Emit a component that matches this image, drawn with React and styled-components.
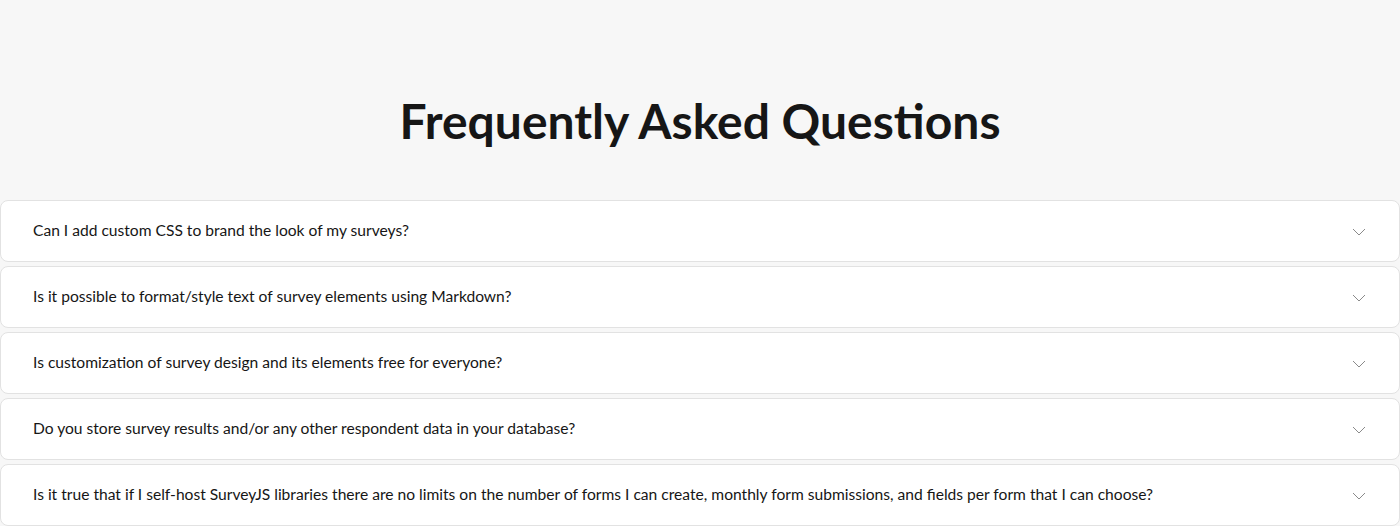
import React from 'react';
import styled, { createGlobalStyle } from 'styled-components';

const questions = [
    'Can I add custom CSS to brand the look of my surveys?',
    'Is it possible to format/style text of survey elements using Markdown?',
    'Is customization of survey design and its elements free for everyone?',
    'Do you store survey results and/or any other respondent data in your database?',
    'Is it true that if I self-host SurveyJS libraries there are no limits on the number of forms I can create, monthly form submissions, and fields per form that I can choose?',
];

const Chevron = () => (
    <svg width="14" height="8" viewBox="0 0 14 8" fill="none">
        <path d="M1 1l6 6 6-6" stroke="#8a8a8a" strokeWidth="1" />
    </svg>
);

const App = () => {
    return (
        <Page>
            <GlobalStyle />
            <Header>
                <Title>Frequently Asked Questions</Title>
            </Header>
            <List>
                {questions.map((q, index) => (
                    <Item key={index}>
                        <Question>{q}</Question>
                        <Toggle>
                            <Chevron />
                        </Toggle>
                    </Item>
                ))}
            </List>
        </Page>
    );
};

export default App;

const GlobalStyle = createGlobalStyle`
    body {
        margin: 0;
        background: #f7f7f7;
        font-family: Lato, "Open Sans", sans-serif;
    }
`;

const Page = styled.div`
    background: #f7f7f7;
    min-height: 526px;
`;

const Header = styled.div`
    padding: 86px 0 44px;
    text-align: center;
`;

const Title = styled.h2`
    margin: 0;
    font-size: 48px;
    line-height: 70px;
    font-weight: 700;
    color: #161616;
`;

const List = styled.div`
    display: flex;
    flex-direction: column;
    gap: 4px;
`;

const Item = styled.div`
    display: flex;
    align-items: center;
    justify-content: space-between;
    height: 62px;
    box-sizing: border-box;
    padding: 0 33px 0 32px;
    background: #fff;
    border: 1px solid #e2e2e2;
    border-radius: 8px;
`;

const Question = styled.div`
    font-size: 15.6px;
    color: #161616;
    padding-bottom: 2px;
`;

const Toggle = styled.div`
    display: grid;
    place-items: center;
    width: 14px;
    height: 14px;
    padding-top: 2px;
`;
